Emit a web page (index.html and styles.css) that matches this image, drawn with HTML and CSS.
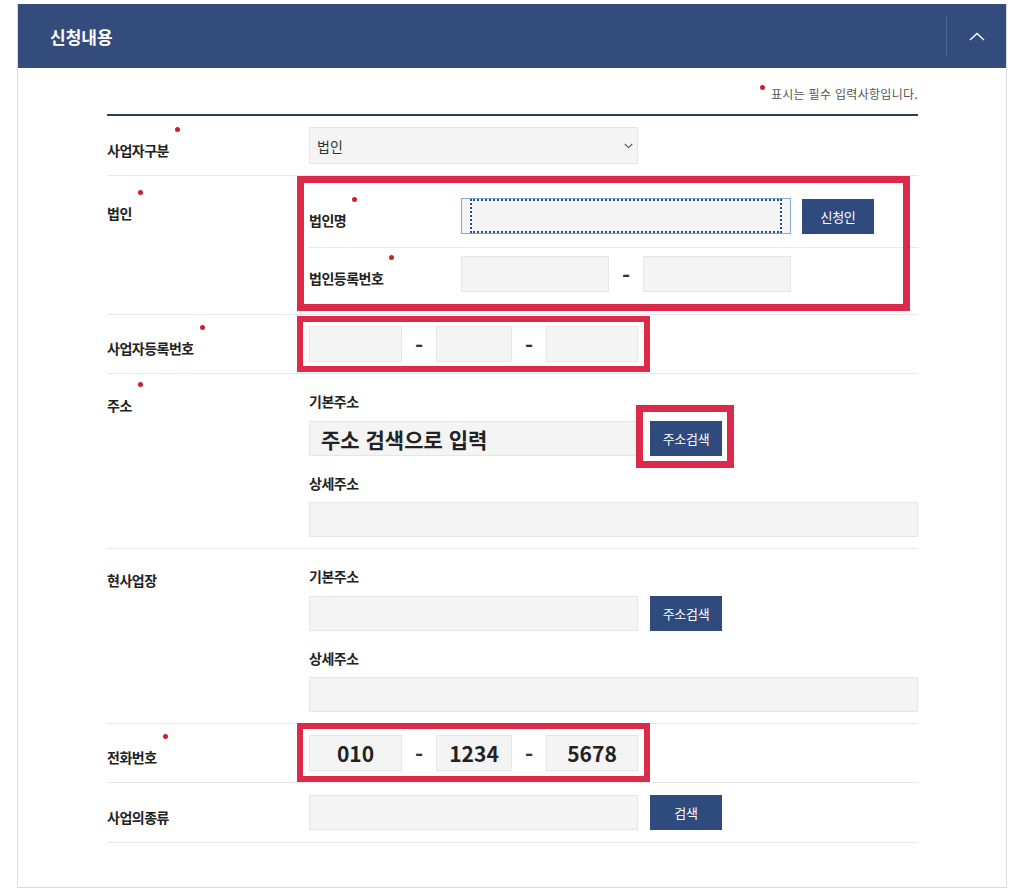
FILE: index.html
```html
<!DOCTYPE html>
<html lang="ko">
<head>
<meta charset="utf-8">
<title>신청내용</title>
<link rel="stylesheet" href="styles.css">
</head>
<body>
<section class="panel">
  <header class="panel-head">
    <h2 class="panel-title">신청내용</h2>
    <button class="panel-toggle" type="button" aria-label="접기">
      <svg width="16" height="9" viewBox="0 0 16 9"><path d="M1 8 L8 1.5 L15 8" fill="none" stroke="#fff" stroke-width="1.4"/></svg>
    </button>
  </header>
  <div class="panel-body">
    <p class="notice"><span class="dot"></span>표시는 필수 입력사항입니다.</p>
    <div class="form">

      <div class="row">
        <div class="th"><span class="req">사업자구분</span></div>
        <div class="td">
          <div class="select"><span>법인</span>
            <svg width="9" height="6" viewBox="0 0 9 6"><path d="M0.8 1 L4.5 4.6 L8.2 1" fill="none" stroke="#555" stroke-width="1.1"/></svg>
          </div>
        </div>
      </div>

      <div class="row">
        <div class="th th-top th-corp"><span class="req">법인</span></div>
        <div class="td td-corp">
          <div class="sub mark mark-corp">
            <div class="sub-row sub-row-1">
              <div class="sub-th"><span class="req">법인명</span></div>
              <div class="sub-td">
                <div class="field w330 focused"></div>
                <button class="btn" type="button">신청인</button>
              </div>
            </div>
            <div class="sub-row sub-row-2">
              <div class="sub-th"><span class="req">법인등록번호</span></div>
              <div class="sub-td">
                <div class="field w148"></div><span class="dash">-</span><div class="field w148"></div>
              </div>
            </div>
          </div>
        </div>
      </div>

      <div class="row">
        <div class="th"><span class="req">사업자등록번호</span></div>
        <div class="td">
          <div class="group mark mark-biz">
            <div class="field w93"></div><span class="dash">-</span><div class="field w76"></div><span class="dash">-</span><div class="field w92"></div>
          </div>
        </div>
      </div>

      <div class="row">
        <div class="th th-top th-addr"><span class="req">주소</span></div>
        <div class="td td-addr">
          <div class="sub-label">기본주소</div>
          <div class="addr-line">
            <div class="field w329 big">주소 검색으로 입력</div>
            <span class="mark mark-btn"><button class="btn" type="button">주소검색</button></span>
          </div>
          <div class="sub-label sub-label-2">상세주소</div>
          <div class="field full"></div>
        </div>
      </div>

      <div class="row">
        <div class="th th-top th-addr"><span>현사업장</span></div>
        <div class="td td-addr">
          <div class="sub-label">기본주소</div>
          <div class="addr-line">
            <div class="field w329"></div>
            <button class="btn" type="button">주소검색</button>
          </div>
          <div class="sub-label sub-label-2">상세주소</div>
          <div class="field full"></div>
        </div>
      </div>

      <div class="row">
        <div class="th"><span class="req">전화번호</span></div>
        <div class="td">
          <div class="group mark mark-phone">
            <div class="field w93 num">010</div><span class="dash">-</span><div class="field w76 num">1234</div><span class="dash">-</span><div class="field w92 num">5678</div>
          </div>
        </div>
      </div>

      <div class="row">
        <div class="th"><span>사업의종류</span></div>
        <div class="td td-last">
          <div class="addr-line">
            <div class="field w329"></div>
            <button class="btn" type="button">검색</button>
          </div>
        </div>
      </div>

    </div>
  </div>
</section>
</body>
</html>
```

FILE: styles.css
```css
* { box-sizing: border-box; }
html, body { margin: 0; padding: 0; background: #fff; }
body {
  font-family: "Noto Sans CJK KR", "Noto Sans", sans-serif;
  color: #222;
}

.panel {
  margin: 4px 17px 0;
  border: 1px solid #dadada;
  border-top: 0;
}
.panel-head {
  height: 64px;
  background: #344c7b;
  display: flex;
  align-items: center;
  justify-content: space-between;
  padding-left: 32px;
}
.panel-title {
  margin: 0;
  font-size: 17px;
  font-weight: 700;
  color: #fff;
  letter-spacing: 0;
}
.panel-toggle {
  width: 60px;
  height: 40px;
  padding: 0;
  border: 0;
  border-left: 1px solid rgba(255, 255, 255, 0.14);
  background: transparent;
  display: flex;
  align-items: center;
  justify-content: center;
}

.panel-body { padding: 0 88px 44px 89px; }

.notice {
  margin: 0;
  padding-top: 16px;
  line-height: 20px;
  text-align: right;
  font-size: 12px;
  color: #555;
  letter-spacing: 0.3px;
}
.notice .dot {
  display: inline-block;
  width: 5px;
  height: 5px;
  border-radius: 50%;
  background: #c8202f;
  vertical-align: top;
  margin: 1px 6px 0 0;
}

.form {
  margin-top: 10px;
  border-top: 2px solid #2f3d5d;
}
.row {
  display: grid;
  grid-template-columns: 202px 1fr;
  border-bottom: 1px solid #e8e8e8;
}
.th {
  display: flex;
  align-items: center;
  padding-top: 8px;
  font-size: 14px;
  font-weight: 700;
  letter-spacing: -0.5px;
}
.th-top { align-items: flex-start; }
.th-corp { padding-top: 27px; }
.th-addr { padding-top: 21px; }

.req { position: relative; line-height: 20px; }
.req::after {
  content: "";
  position: absolute;
  width: 5px;
  height: 5px;
  border-radius: 50%;
  background: #c8202f;
  top: -13px;
  right: -11px;
}

.td { padding: 11px 0; }
.td-corp { padding: 12px 0 15px; }
.td-addr { padding: 17px 0 11px; }
.td-last { padding: 12px 0; }

.select {
  width: 329px;
  height: 37px;
  display: flex;
  align-items: center;
  justify-content: space-between;
  padding: 0 4px 0 7px;
  background: #f4f4f4;
  border: 1px solid #e6e6e6;
  font-size: 14px;
  color: #333;
}

.sub-row {
  display: grid;
  grid-template-columns: 152px 1fr;
}
.sub-row-1 { padding: 10px 0 13px; border-bottom: 1px solid #e8e8e8; }
.sub-row-2 { padding: 8px 0 7px; }
.sub-th {
  display: flex;
  align-items: center;
  padding-top: 8px;
  font-size: 14px;
  font-weight: 700;
  letter-spacing: -0.5px;
}
.sub-td { display: flex; align-items: center; }
.sub-row-1 .sub-td { gap: 11px; }

.field {
  height: 36px;
  background: #f4f4f4;
  border: 1px solid #e6e6e6;
}
.w330 { width: 330px; }
.w329 { width: 329px; }
.w148 { width: 148px; }
.w93 { width: 93px; }
.w76 { width: 76px; }
.w92 { width: 92px; }
.full { width: 100%; height: 35px; }

.focused {
  position: relative;
  border-color: #7fa8cc;
}
.focused::after {
  content: "";
  position: absolute;
  top: 0;
  bottom: 0;
  left: 8px;
  right: 8px;
  border: 2px dotted #1f4f8f;
}

.big {
  display: flex;
  align-items: center;
  padding-left: 11px;
  font-size: 21px;
  font-weight: 700;
  color: #222;
  height: 35px;
}
.num {
  display: flex;
  align-items: center;
  justify-content: center;
  font-size: 21px;
  font-weight: 700;
  color: #222;
}

.dash {
  width: 34px;
  height: 36px;
  display: flex;
  justify-content: center;
  align-items: center;
  font-size: 22px;
  font-weight: 700;
  line-height: 1;
  color: #333;
}

.btn {
  width: 72px;
  height: 35px;
  padding: 0;
  border: 0;
  background: #2f4a7c;
  color: #fff;
  font-family: "Noto Sans CJK KR", "Noto Sans", sans-serif;
  font-size: 13px;
  letter-spacing: -0.3px;
}

.group {
  display: flex;
  align-items: center;
  width: max-content;
}

.addr-line {
  display: flex;
  align-items: center;
  gap: 12px;
}
.addr-line .field { height: 35px; }

.sub-label {
  line-height: 20px;
  font-size: 14px;
  font-weight: 700;
  letter-spacing: -0.5px;
  margin-bottom: 10px;
}
.sub-label-2 { margin-top: 17px; margin-bottom: 9px; }

/* review highlight boxes drawn over the form */
.mark { position: relative; display: flex; }
.mark::after {
  content: "";
  position: absolute;
  border: 7px solid #dc2a4b;
  pointer-events: none;
}
.sub.mark { display: block; }
.mark-corp::after { top: -12px; left: -12px; right: 8px; bottom: -12px; }
.mark-biz::after { top: -10px; left: -12px; right: -12px; bottom: -10px; border-width: 6px; }
.mark-phone::after { top: -12px; left: -12px; right: -12px; bottom: -11px; border-width: 6px; }
.mark-btn::after { top: -16px; left: -14px; right: -12px; bottom: -12px; }
```
